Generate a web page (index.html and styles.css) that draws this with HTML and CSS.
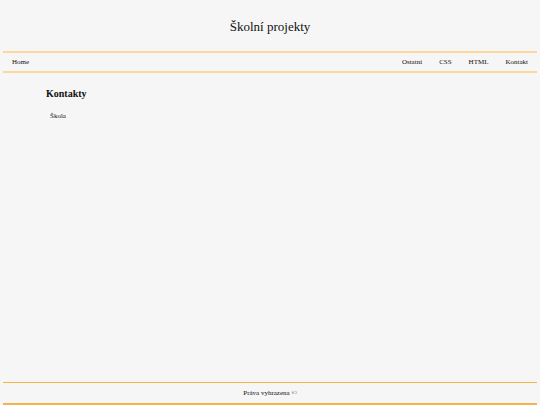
FILE: index.html
```html
<!DOCTYPE html>
<html lang="cs">
<head>
    <meta charset="UTF-8">
    <meta name="viewport" content="width=device-width, initial-scale=1.0">
    <title>Školní projekty</title>
    <link rel="stylesheet" href="styles.css">
</head>
<body>
    <header class="hlavicka">
        <h1>Školní projekty</h1>
    </header>

    <nav class="menu">
        <a href="#" class="domu">Home</a>
        <ul class="odkazy">
            <li><a href="#">Ostatní</a></li>
            <li><a href="#">CSS</a></li>
            <li><a href="#">HTML</a></li>
            <li><a href="#">Kontakt</a></li>
        </ul>
    </nav>

    <main class="obsah">
        <h2>Kontakty</h2>
        <p>Škola</p>
    </main>

    <footer class="paticka">
        <p>Práva vyhrazena ©</p>
    </footer>
</body>
</html>
```

FILE: styles.css
```css
* {
    margin: 0;
    padding: 0;
    box-sizing: border-box;
}

:root {
    --fondo: #f6f6f6;
    --text: #111;
    --linka: #fbd89c;
    --linka-paticka: #f3b54a;
}

body {
    background: var(--fondo);
    color: var(--text);
    font-family: "Times New Roman", "Liberation Serif", serif;
    display: flex;
    flex-direction: column;
    min-height: 100vh;
    padding: 0 3px;
}

a {
    color: var(--text);
    text-decoration: none;
}

.hlavicka {
    padding: 18px 0 15px;
    text-align: center;
}

.hlavicka h1 {
    font-size: 13px;
    font-weight: normal;
    line-height: 18px;
}

/* Menu */
.menu {
    display: flex;
    justify-content: space-between;
    align-items: center;
    border-top: 2px solid var(--linka);
    border-bottom: 2px solid var(--linka);
    height: 22px;
    padding: 0 9px;
    font-size: 7px;
}

.odkazy {
    display: flex;
    list-style: none;
    gap: 17px;
}

/* Obsah */
.obsah {
    flex: 1;
    padding: 15px 43px;
}

.obsah h2 {
    font-size: 10px;
    line-height: 12px;
    margin-bottom: 12px;
}

.obsah p {
    font-size: 7px;
    padding-left: 4px;
}

/* Paticka */
.paticka {
    border-top: 1px solid var(--linka-paticka);
    border-bottom: 2px solid var(--linka-paticka);
    height: 23px;
    display: flex;
    align-items: center;
    justify-content: center;
    font-size: 7px;
}
```
